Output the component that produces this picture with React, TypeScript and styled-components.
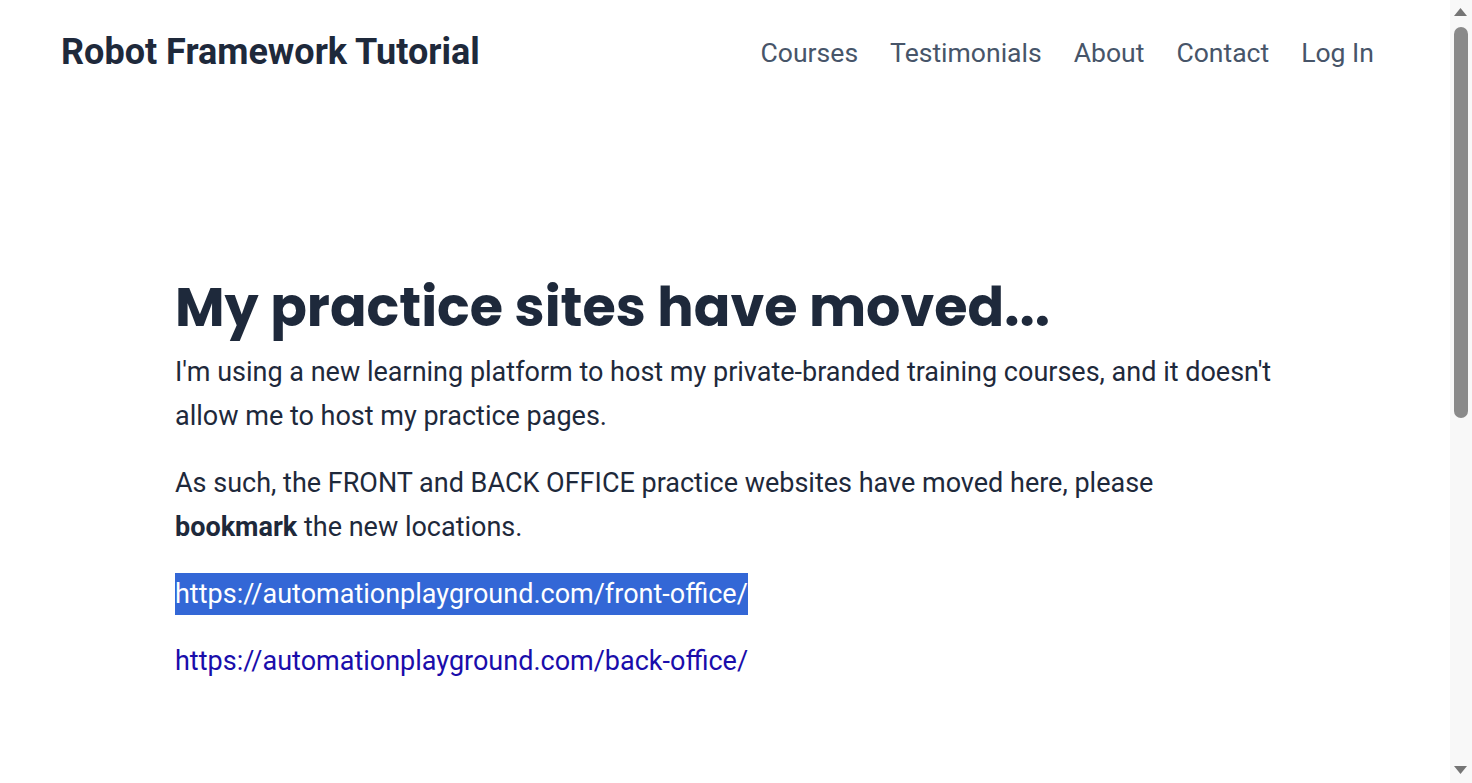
import React from "react";
import styled, { createGlobalStyle } from "styled-components";

const Global = createGlobalStyle`
  html, body { margin: 0; padding: 0; background: #ffffff; overflow: hidden; }
  body { font-family: Roboto, "Liberation Sans", sans-serif; color: #1e293b; }
  * { box-sizing: border-box; }
`;

const Shell = styled.div`
  display: flex;
  height: 100vh;
  width: 100%;
`;

const Viewport = styled.div`
  flex: 1;
  min-width: 0;
  overflow: hidden;
`;

const ScrollBar = styled.div`
  width: 22px;
  flex: none;
  display: flex;
  flex-direction: column;
  background: #f8f8f8;
`;

const ArrowBtn = styled.div<{ $down?: boolean }>`
  height: 27px;
  display: flex;
  justify-content: center;
  align-items: ${(p) => (p.$down ? "flex-end" : "flex-start")};
  padding: ${(p) => (p.$down ? "0 0 9px" : "8px 0 0")};
  padding-right: 1px;
`;

const Track = styled.div`
  flex: 1;
  display: flex;
  flex-direction: column;
  align-items: center;
  padding-right: 1px;
`;

const Thumb = styled.div`
  width: 14px;
  height: 391px;
  border-radius: 7px;
  background: #8a8a8a;
`;

const Header = styled.header`
  max-width: 1328px;
  margin: 0 auto;
  height: 104px;
  display: flex;
  align-items: center;
  justify-content: space-between;
`;

const Brand = styled.a`
  font-family: Roboto, "Liberation Sans", sans-serif;
  font-weight: 700;
  font-size: 36px;
  color: #1e293b;
  text-decoration: none;
`;

const Nav = styled.nav`
  display: flex;
  align-items: center;
  margin-right: -1px;
`;

const NavLink = styled.a`
  padding: 0 16px;
  font-size: 26.55px;
  color: #475569;
  text-decoration: none;
`;

const Main = styled.main`
  max-width: 1100px;
  margin: 160px auto 0;
`;

const Title = styled.h1`
  font-family: Poppins, Inter, "Noto Sans", sans-serif;
  font-weight: 700;
  font-size: 54px;
  line-height: 86px;
  margin: 0;
  color: #1e293b;
`;

const Para = styled.p`
  font-size: 27px;
  line-height: 44px;
  margin: 0 0 23px;
  color: #1e293b;
`;

const Link = styled.a<{ $selected?: boolean }>`
  color: ${(p) => (p.$selected ? "#ffffff" : "#1a0dab")};
  background: ${(p) => (p.$selected ? "#3367d6" : "transparent")};
  text-decoration: none;
  padding: 5px 0;
`;

const Tri = ({ down }: { down?: boolean }) => (
  <svg width="13" height="8" viewBox="0 0 13 8">
    <polygon points={down ? "0,0 13,0 6.5,8" : "6.5,0 13,8 0,8"} fill="#757575" />
  </svg>
);

export default function App() {
  return (
    <Shell>
      <Global />
      <Viewport>
        <Header>
          <Brand href="#">Robot Framework Tutorial</Brand>
          <Nav>
            <NavLink href="#">Courses</NavLink>
            <NavLink href="#">Testimonials</NavLink>
            <NavLink href="#">About</NavLink>
            <NavLink href="#">Contact</NavLink>
            <NavLink href="#">Log In</NavLink>
          </Nav>
        </Header>
        <Main>
          <Title>My practice sites have moved...</Title>
          <Para>
            I'm using a new learning platform to host my private-branded training courses, and it doesn't allow me to host my practice pages.
          </Para>
          <Para>
            As such, the FRONT and BACK OFFICE practice websites have moved here, please <b>bookmark</b> the new locations.
          </Para>
          <Para>
            <Link href="#" $selected>https://automationplayground.com/front-office/</Link>
          </Para>
          <Para>
            <Link href="#">https://automationplayground.com/back-office/</Link>
          </Para>
        </Main>
      </Viewport>
      <ScrollBar>
        <ArrowBtn>
          <Tri />
        </ArrowBtn>
        <Track>
          <Thumb />
        </Track>
        <ArrowBtn $down>
          <Tri down />
        </ArrowBtn>
      </ScrollBar>
    </Shell>
  );
}
